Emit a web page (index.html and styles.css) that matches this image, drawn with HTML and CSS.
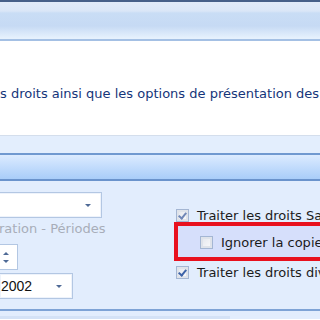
FILE: index.html
```html
<!DOCTYPE html>
<html>
<head>
    <title>Options de traitement</title>
    <link rel="stylesheet" href="styles.css">
</head>
<body>
    <div class="ribbon">
        <div class="ribbon-top"></div>
        <div class="ribbon-main"></div>
    </div>

    <div class="desc">
        <p>s droits ainsi que les options de présentation des</p>
    </div>

    <div class="band"></div>

    <div class="group-header"></div>

    <div class="group-body">
        <div class="left-col">
            <div class="combo wide">
                <span class="combo-text"></span>
                <span class="arrow"></span>
            </div>
            <div class="muted">ration - Périodes</div>
            <div class="spin">
                <span class="spin-up"></span>
                <span class="spin-down"></span>
            </div>
            <div class="combo year">
                <span class="combo-text">2002</span>
                <span class="arrow"></span>
            </div>
        </div>

        <div class="right-col">
            <label class="check-row">
                <span class="check checked faded"></span>
                <span>Traiter les droits Sacem</span>
            </label>
            <div class="highlight">
                <label class="check-row">
                    <span class="check"></span>
                    <span>Ignorer la copie privée</span>
                </label>
            </div>
            <label class="check-row">
                <span class="check checked"></span>
                <span>Traiter les droits divers</span>
            </label>
        </div>
    </div>

    <div class="group-footer">
        <div class="footer-tab"></div>
    </div>
</body>
</html>
```

FILE: styles.css
```css
body {
    margin: 0;
    padding: 0;
    width: 320px;
    height: 320px;
    overflow: hidden;
    font-family: "DejaVu Sans", Verdana, sans-serif;
    font-size: 13px;
    background: #ffffff;
}
.ribbon-top {
    height: 2px;
    background: #465f88;
}
.ribbon-main {
    height: 37px;
    background: linear-gradient(to bottom, #e0eaf8 0px, #dae6f7 9px, #c9ddf5 11px, #c6daf4 24px, #e6f1fd 36px);
    border-bottom: 2px solid #a4c0e4;
}
.desc {
    height: 94px;
    border-bottom: 1px solid #d4deec;
}
.desc p {
    margin: 0;
    padding-top: 45px;
    white-space: nowrap;
    color: #15357a;
    line-height: 16px;
}
.band {
    height: 17px;
    background: #e3eefd;
}
.group-header {
    height: 24px;
    border-top: 2px solid #7099d0;
    border-bottom: 2px solid #6a93cc;
    background: linear-gradient(to bottom, #dcebff, #a9cdf9);
}
.group-body {
    height: 128px;
    display: flex;
    background: #e2edfd;
}
.left-col {
    flex: none;
    width: 174px;
    padding-top: 11px;
    display: flex;
    flex-direction: column;
    align-items: flex-start;
}
.combo {
    box-sizing: border-box;
    height: 26px;
    background: #ffffff;
    border: 1px solid #b3c7e3;
    box-shadow: inset 0 0 0 1px #eef3fb;
    display: flex;
    align-items: center;
    justify-content: space-between;
    padding: 0 10px 0 0;
}
.combo.wide {
    width: 150px;
    margin-left: -48px;
}
.combo.year {
    width: 74px;
    margin-left: -1px;
    margin-top: 3px;
}
.combo-text {
    font-family: "Liberation Sans", Arial, sans-serif;
    font-size: 14px;
    color: #111111;
    padding-left: 1px;
}
.arrow {
    width: 0;
    height: 0;
    border-left: 3px solid transparent;
    border-right: 3px solid transparent;
    border-top: 3px solid #4f6a96;
}
.muted {
    margin-top: 3px;
    margin-left: -1px;
    color: #a8adb9;
    line-height: 15px;
    white-space: nowrap;
}
.spin {
    box-sizing: border-box;
    width: 40px;
    height: 26px;
    margin-left: -22px;
    margin-top: 8px;
    background: #ffffff;
    border: 1px solid #b3c7e3;
    display: flex;
    flex-direction: column;
    align-items: flex-end;
    justify-content: center;
    gap: 5px;
    padding-right: 8px;
}
.spin-up {
    width: 0;
    height: 0;
    border-left: 3px solid transparent;
    border-right: 3px solid transparent;
    border-bottom: 3px solid #4f6a96;
}
.spin-down {
    width: 0;
    height: 0;
    border-left: 3px solid transparent;
    border-right: 3px solid transparent;
    border-top: 3px solid #4f6a96;
}
.right-col {
    padding-top: 28px;
    flex: 1;
    min-width: 0;
}
.check-row {
    display: flex;
    align-items: center;
    gap: 8px;
    height: 13px;
    padding-left: 2px;
    color: #1b1b1b;
    white-space: nowrap;
}
.check {
    box-sizing: border-box;
    flex: none;
    width: 13px;
    height: 13px;
    border: 1px solid #a4b6d3;
    background: linear-gradient(135deg, #e2e5ec, #fbfbfc);
    box-shadow: inset 0 0 0 2px #dfe3ea;
    position: relative;
}
.check.checked::after {
    content: "";
    position: absolute;
    left: 3px;
    top: 1px;
    width: 3px;
    height: 6px;
    border-right: 2px solid #3d63a8;
    border-bottom: 2px solid #3d63a8;
    transform: rotate(40deg);
}
.check.faded::after {
    border-color: #6f86b6;
}
.highlight {
    width: 200px;
    height: 39px;
    box-sizing: border-box;
    border: 4px solid #e8101e;
    border-right: none;
    background: #d6dffb;
    display: flex;
    align-items: center;
    padding-left: 20px;
    padding-top: 2px;
    margin-bottom: 5px;
}
.group-footer {
    height: 8px;
    border-top: 2px solid #7ea3d6;
    background: #e2edfd;
}
.footer-tab {
    width: 230px;
    height: 3px;
    margin-top: 5px;
    background: #d4e2f6;
}
```
